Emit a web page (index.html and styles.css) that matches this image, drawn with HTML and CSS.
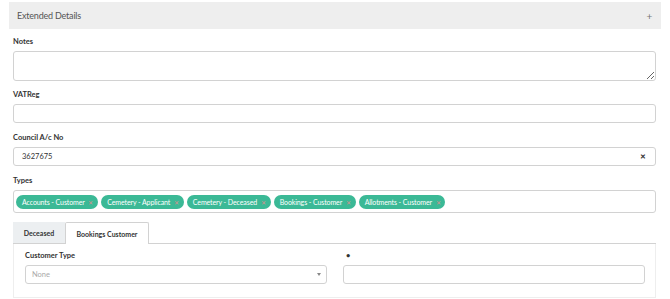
FILE: index.html
```html
<!DOCTYPE html>
<html lang="en">
  <head>
    <meta charset="UTF-8">
    <title>Extended Details</title>
    <link rel="stylesheet" href="styles.css">
  </head>
  <body>
    <div class="panel">
      <div class="panel-heading">
        <span>Extended Details</span>
        <span class="toggle">+</span>
      </div>
      <div class="panel-body">
        <div class="field">
          <label>Notes</label>
          <textarea class="control notes"></textarea>
        </div>
        <div class="field">
          <label>VATReg</label>
          <input type="text" class="control">
        </div>
        <div class="field">
          <label>Council A/c No</label>
          <div class="control with-clear">
            <span>3627675</span>
            <span class="clear">&#x2715;</span>
          </div>
        </div>
        <div class="field">
          <label>Types</label>
          <div class="control tags">
            <span class="tag">Accounts - Customer <i>&#x2715;</i></span>
            <span class="tag">Cemetery - Applicant <i>&#x2715;</i></span>
            <span class="tag">Cemetery - Deceased <i>&#x2715;</i></span>
            <span class="tag">Bookings - Customer <i>&#x2715;</i></span>
            <span class="tag">Allotments - Customer <i>&#x2715;</i></span>
          </div>
        </div>
        <div class="tabs">
          <div class="tab-list">
            <span class="tab">Deceased</span>
            <span class="tab active">Bookings Customer</span>
            <span class="tab-rest"></span>
          </div>
          <div class="tab-content">
            <div class="field">
              <label>Customer Type</label>
              <div class="control select">
                <span>None</span>
                <span class="caret"></span>
              </div>
            </div>
            <div class="field">
              <label class="dot">&bull;</label>
              <input type="text" class="control">
            </div>
          </div>
        </div>
      </div>
    </div>
  </body>
</html>
```
FILE: styles.css
```css
body {
  margin: 0;
  font-family: 'Lato', 'Liberation Sans', sans-serif;
  color: #333;
  background: #fff;
}

.panel {
  margin: 2px 9px 0 9px;
}

.panel-heading {
  display: flex;
  justify-content: space-between;
  align-items: center;
  height: 27px;
  padding: 0 8px;
  background: #eeeeee;
  color: #555;
  font-size: 9px;
  letter-spacing: -0.2px;
}

.toggle {
  font-size: 10px;
  color: #777;
  padding-right: 1px;
}

.panel-body {
  padding: 5px 5px 0 4px;
}

.field {
  display: flex;
  flex-direction: column;
}

.field label {
  font-size: 7.5px;
  font-weight: bold;
  color: #333;
  height: 11px;
  line-height: 11px;
  margin: 2px 0 4px 0;
}

.control {
  box-sizing: border-box;
  border: 1px solid #d2d2d2;
  border-radius: 3px;
  background: #fff;
  height: 19px;
  margin: 0 0 7px 0;
  font-family: inherit;
  font-size: 7.5px;
  padding: 0 8px;
  color: #333;
}

.notes {
  height: 30px;
  resize: vertical;
  margin-bottom: 6px;
}

.with-clear {
  display: flex;
  justify-content: space-between;
  align-items: center;
}

.clear {
  font-size: 7px;
  font-weight: bold;
  color: #333;
  padding-right: 1px;
}

.tags {
  display: flex;
  align-items: center;
  gap: 3px;
  height: 23px;
  padding: 0 2px;
  margin-bottom: 9px;
}

.tag {
  background: #3bb996;
  color: #fff;
  font-size: 7px;
  letter-spacing: -0.1px;
  border-radius: 7px;
  height: 14px;
  line-height: 14px;
  padding: 0 5px 0 6px;
  white-space: nowrap;
}

.tag i {
  font-style: normal;
  color: #d98e8e;
  font-size: 6px;
  margin-left: 2px;
}

.tab-list {
  display: flex;
  height: 22px;
}

.tab {
  box-sizing: border-box;
  display: flex;
  align-items: center;
  justify-content: center;
  font-size: 7px;
  font-weight: bold;
  color: #333;
  white-space: nowrap;
  border-bottom: 1px solid #d2d2d2;
}

.tab:first-child {
  background: #eceff1;
  width: 52px;
}

.tab.active {
  background: #fff;
  border: 1px solid #d2d2d2;
  border-bottom: none;
  border-radius: 2px 2px 0 0;
  width: 84px;
}

.tab-rest {
  flex: 1;
  border-bottom: 1px solid #d2d2d2;
}

.tab-content {
  display: grid;
  grid-template-columns: 1fr 1fr;
  column-gap: 16px;
  padding: 4px 10px 6px 11px;
  border: 1px solid #eee;
  border-top: none;
}

.select {
  display: flex;
  justify-content: space-between;
  align-items: center;
  color: #aaa;
  padding: 0 5px 0 6px;
}

.caret {
  width: 0;
  height: 0;
  border-left: 2.5px solid transparent;
  border-right: 2.5px solid transparent;
  border-top: 3px solid #888;
}

.field label.dot {
  padding-left: 3px;
}
```
